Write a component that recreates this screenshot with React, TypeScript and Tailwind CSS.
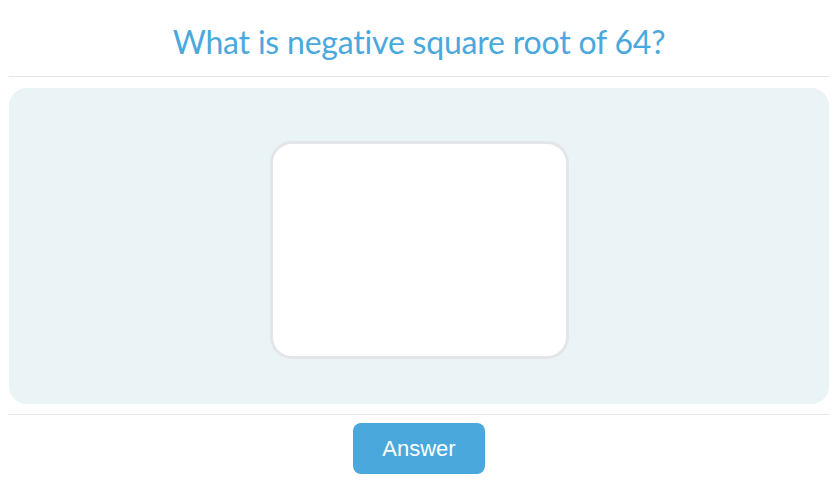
import React from "react";

export default function App() {
  return (
    <div className="w-[840px] h-[501px] bg-white pl-[9px] pr-[11px] overflow-hidden" style={{ fontFamily: "Lato, 'Noto Sans', sans-serif" }}>
      <div className="h-[77px] flex items-center justify-center border-b border-[#e6e6e6] pt-[8px]">
        <h1 className="text-[32px] text-[#4aa8dc] leading-none [font-variant-ligatures:none] tracking-[-0.2px]">What is negative square root of 64?</h1>
      </div>
      <div className="mt-[11px] h-[316px] rounded-[18px] bg-[#eaf3f6] flex justify-center pt-[53px]">
        <div className="w-[299px] h-[218px] bg-white border-[3px] border-[#e4e5e9] rounded-[22px]" />
      </div>
      <div className="mt-[10px] border-t border-[#e6e6e6] flex justify-center pt-[8px]">
        <button className="w-[132px] h-[51px] rounded-[8px] bg-[#4ba8dc] text-white text-[22px]" style={{ fontFamily: "'Liberation Sans', Arial, sans-serif" }}>
          Answer
        </button>
      </div>
    </div>
  );
}
